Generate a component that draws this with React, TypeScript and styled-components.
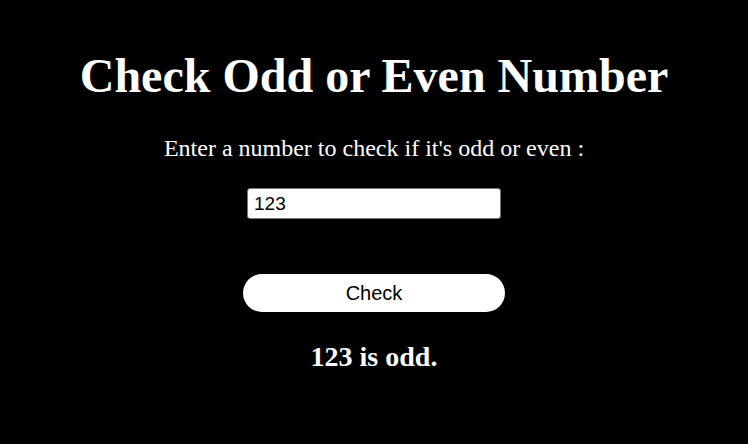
import React, { useState } from "react";
import styled, { createGlobalStyle } from "styled-components";

const Global = createGlobalStyle`
  html, body { margin: 0; padding: 0; background: #000; }
  body { font-family: "Liberation Serif", "Times New Roman", serif; color: #fff; }
`;

const Page = styled.main`
  display: flex;
  flex-direction: column;
  align-items: center;
  padding-top: 48px;
`;

const Title = styled.h1`
  margin: 0;
  font-size: 48px;
  line-height: 56px;
  font-weight: bold;
`;

const Prompt = styled.p`
  margin: 30px 0 0;
  font-size: 24px;
  line-height: 28px;
`;

const Input = styled.input`
  margin-top: 26px;
  box-sizing: border-box;
  width: 254px;
  height: 31px;
  padding: 0 6px;
  border: 1px solid #767676;
  border-radius: 3px;
  background: #fff;
  color: #000;
  font-family: "Liberation Sans", Arial, sans-serif;
  font-size: 19px;
  outline: none;
`;

const Button = styled.button`
  margin-top: 55px;
  width: 262px;
  height: 38px;
  border: none;
  border-radius: 19px;
  background: #fff;
  color: #000;
  font-family: "Liberation Sans", Arial, sans-serif;
  font-size: 20px;
  cursor: pointer;
`;

const Result = styled.p`
  margin: 29px 0 0;
  font-size: 28px;
  line-height: 32px;
  font-weight: bold;
`;

export default function App() {
  const [value, setValue] = useState("123");
  const [result, setResult] = useState("123 is odd.");
  const check = () => {
    const n = parseInt(value, 10);
    if (isNaN(n)) setResult("Please enter a number.");
    else setResult(`${n} is ${n % 2 === 0 ? "even" : "odd"}.`);
  };
  return (
    <>
      <Global />
      <Page>
        <Title>Check Odd or Even Number</Title>
        <Prompt>Enter a number to check if it's odd or even :</Prompt>
        <Input value={value} onChange={(e) => setValue(e.target.value)} />
        <Button onClick={check}>Check</Button>
        <Result>{result}</Result>
      </Page>
    </>
  );
}
